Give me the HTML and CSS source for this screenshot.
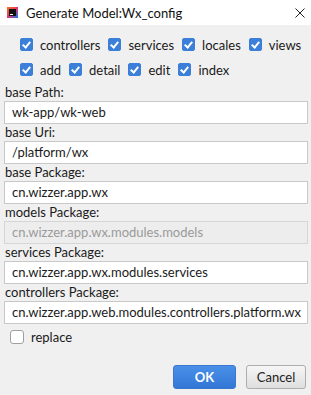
FILE: index.html
```html
<!DOCTYPE html>
<html lang="en">
<head>
    <meta charset="UTF-8">
    <meta name="viewport" content="width=device-width, initial-scale=1.0">
    <title>Generate Model</title>
    <link rel="stylesheet" href="styles.css">
</head>
<body>
    <div class="dialog">
        <div class="titlebar">
            <svg class="app-icon" width="11" height="11" viewBox="0 0 11 11">
                <defs>
                    <linearGradient id="ij" x1="0" y1="0" x2="1" y2="1">
                        <stop offset="0" stop-color="#f97a12"/>
                        <stop offset="0.5" stop-color="#e7336b"/>
                        <stop offset="1" stop-color="#087cfa"/>
                    </linearGradient>
                </defs>
                <rect x="0" y="0" width="11" height="11" fill="url(#ij)"/>
                <rect x="2" y="2" width="7" height="7" fill="#111"/>
                <rect x="3" y="7" width="3" height="1" fill="#fff"/>
            </svg>
            <span class="title">Generate Model:Wx_config</span>
            <svg class="close" width="10" height="10" viewBox="0 0 10 10">
                <path d="M0.5 0.5 L9.5 9.5 M9.5 0.5 L0.5 9.5" stroke="#222" stroke-width="1"/>
            </svg>
        </div>

        <div class="checks">
            <div class="check-row">
                <label class="check"><span class="box on"></span>controllers</label>
                <label class="check"><span class="box on"></span>services</label>
                <label class="check"><span class="box on"></span>locales</label>
                <label class="check"><span class="box on"></span>views</label>
            </div>
            <div class="check-row">
                <label class="check"><span class="box on"></span>add</label>
                <label class="check"><span class="box on"></span>detail</label>
                <label class="check"><span class="box on"></span>edit</label>
                <label class="check"><span class="box on"></span>index</label>
            </div>
        </div>

        <div class="form">
            <div class="label">base Path:</div>
            <div class="field">wk-app/wk-web</div>
            <div class="label">base Uri:</div>
            <div class="field">/platform/wx</div>
            <div class="label">base Package:</div>
            <div class="field">cn.wizzer.app.wx</div>
            <div class="label">models Package:</div>
            <div class="field disabled">cn.wizzer.app.wx.modules.models</div>
            <div class="label">services Package:</div>
            <div class="field">cn.wizzer.app.wx.modules.services</div>
            <div class="label">controllers Package:</div>
            <div class="field">cn.wizzer.app.web.modules.controllers.platform.wx</div>
        </div>

        <div class="replace">
            <label class="check"><span class="box"></span>replace</label>
        </div>

        <div class="buttons">
            <button class="btn primary">OK</button>
            <button class="btn">Cancel</button>
        </div>
    </div>
</body>
</html>
```

FILE: styles.css
```css
:root {
    --bg: #f0f0f0;
    --blue: #3b7fd9;
    --border: #c9c9c9;
}

body {
    margin: 0;
    font-family: 'Lato', sans-serif;
    font-size: 13px;
    color: #1a1a1a;
    background: var(--bg);
}

.dialog {
    width: 311px;
    height: 395px;
    display: flex;
    flex-direction: column;
}

.titlebar {
    height: 25px;
    background: #fff;
    display: flex;
    align-items: center;
    padding-left: 7px;
    padding-right: 6px;
}

.title {
    margin-left: 8px;
    font-size: 13px;
    color: #111;
    flex: 1;
}

.checks {
    padding: 7px 0 2px 20px;
}

.check-row {
    height: 25px;
    display: flex;
    align-items: center;
    gap: 8px;
}

.check {
    display: flex;
    align-items: center;
    gap: 7px;
}

.box {
    width: 13px;
    height: 13px;
    box-sizing: border-box;
    border: 1px solid #8c8c8c;
    border-radius: 2px;
    background: #fff;
    position: relative;
}

.box.on {
    background: var(--blue);
    border-color: var(--blue);
}

.box.on::after {
    content: '';
    position: absolute;
    left: 3px;
    top: 1px;
    width: 3px;
    height: 6px;
    border: solid #fff;
    border-width: 0 2px 2px 0;
    transform: rotate(40deg);
}

.form {
    display: flex;
    flex-direction: column;
}

.label {
    height: 17px;
    line-height: 17px;
    padding-left: 5px;
}

.field {
    height: 23px;
    line-height: 21px;
    box-sizing: border-box;
    margin: 0 3px 0 4px;
    padding-left: 7px;
    border: 1px solid var(--border);
    background: #fff;
    white-space: nowrap;
    overflow: hidden;
}

.field.disabled {
    background: #ededed;
    color: #9a9a9a;
    border-color: #d6d6d6;
}

.replace {
    height: 26px;
    display: flex;
    align-items: center;
    padding-left: 10px;
}

.replace .box {
    width: 14px;
    height: 14px;
    border-color: #a0a0a0;
    border-radius: 3px;
}

.buttons {
    display: flex;
    justify-content: flex-end;
    gap: 10px;
    padding: 15px 5px 0 0;
}

.btn {
    height: 24px;
    width: 60px;
    font-family: inherit;
    font-size: 13px;
    border: 1px solid #adadad;
    border-radius: 3px;
    background: linear-gradient(#f6f6f6, #dedede);
    color: #222;
    padding: 0;
}

.btn.primary {
    width: 63px;
    border-color: #3a78d0;
    background: linear-gradient(#4a90e8, #3377d6);
    color: #fff;
    font-weight: bold;
}
```
